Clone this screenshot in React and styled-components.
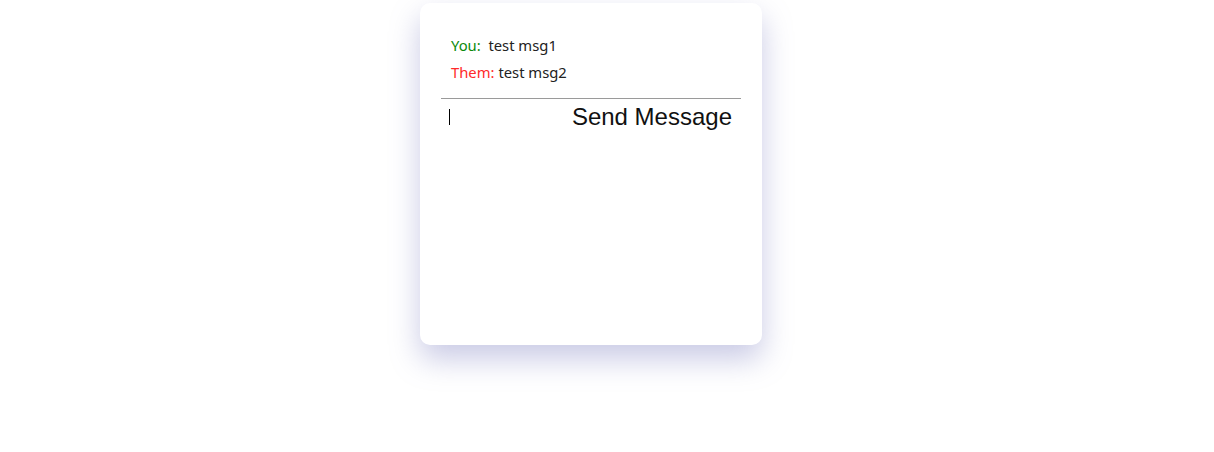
import React, { useState } from "react";
import styled, { createGlobalStyle } from "styled-components";

const Global = createGlobalStyle`
  html, body { margin: 0; padding: 0; background: #fff; }
  body { font-family: "Noto Sans", "Open Sans", sans-serif; }
`;

const Page = styled.div`
  padding: 3px 0 0 420px;
  height: 452px;
  box-sizing: border-box;
`;

const Card = styled.div`
  width: 342px;
  height: 342px;
  box-sizing: border-box;
  background: #fff;
  border-radius: 10px;
  padding: 21px;
  box-shadow: 0 14px 30px rgba(120, 122, 190, 0.4);
  display: flex;
  flex-direction: column;
`;

const MessageList = styled.div`
  padding: 8px 10px 0;
  margin-bottom: 12px;
  display: flex;
  flex-direction: column;
`;

const Message = styled.div`
  font-size: 14.8px;
  line-height: 27px;
  color: #222;
  white-space: pre;
`;

const Sender = styled.span`
  color: ${(p) => (p.$me ? "#0a8a0a" : "#ff2a2a")};
`;

const Divider = styled.hr`
  margin: 0;
  border: none;
  border-top: 1px solid #9a9a9a;
`;

const InputRow = styled.form`
  display: flex;
  align-items: center;
  padding: 4px 0 0;
`;

const InputWrap = styled.div`
  position: relative;
  flex: 1;
  min-width: 0;
  display: flex;
  margin-left: 6px;
`;

const Input = styled.input`
  flex: 1;
  min-width: 0;
  border: none;
  outline: none;
  padding: 2px 2px;
  font-size: 16px;
  font-family: "Liberation Sans", Arial, sans-serif;
  background: transparent;
  caret-color: transparent;
`;

const Caret = styled.span`
  position: absolute;
  left: 2px;
  top: 50%;
  width: 1px;
  height: 16px;
  margin-top: -8px;
  background: #000;
  pointer-events: none;
`;

const SendButton = styled.button`
  border: none;
  background: transparent;
  font-family: "Liberation Sans", Arial, sans-serif;
  font-size: 24px;
  color: #111;
  padding: 0 9px 0 0;
  line-height: 28px;
  cursor: pointer;
`;

export default function App() {
  const [value, setValue] = useState("");
  const messages = [
    { me: true, label: "You:", text: "  test msg1" },
    { me: false, label: "Them:", text: " test msg2" },
  ];
  return (
    <>
      <Global />
      <Page>
        <Card>
          <MessageList>
            {messages.map((m, i) => (
              <Message key={i}>
                <Sender $me={m.me}>{m.label}</Sender>
                {m.text}
              </Message>
            ))}
          </MessageList>
          <Divider />
          <InputRow onSubmit={(e) => e.preventDefault()}>
            <InputWrap>
              <Input autoFocus value={value} onChange={(e) => setValue(e.target.value)} />
              {value === "" && <Caret />}
            </InputWrap>
            <SendButton type="submit">Send Message</SendButton>
          </InputRow>
        </Card>
      </Page>
    </>
  );
}
